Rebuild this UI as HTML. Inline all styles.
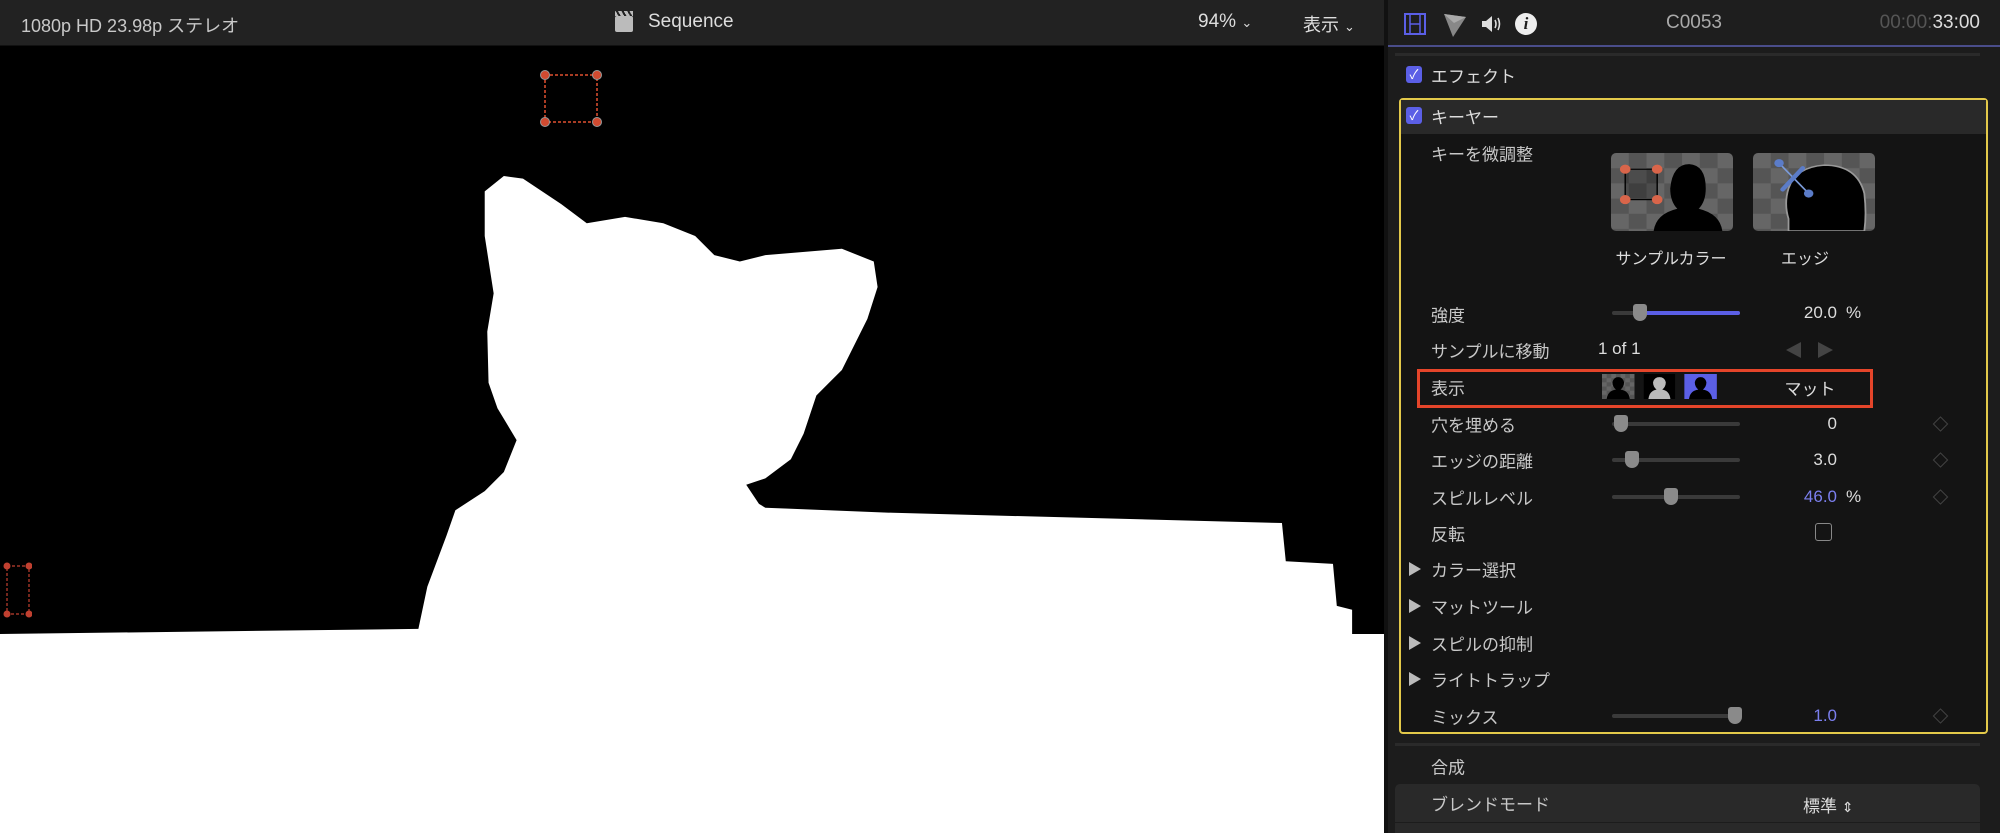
<!DOCTYPE html>
<html><head><meta charset="utf-8"><style>
*{margin:0;padding:0;box-sizing:border-box}
body{width:2000px;height:833px;background:#000;position:relative;overflow:hidden;font-family:"Liberation Sans","Noto Sans CJK JP",sans-serif;color:#cfcfcf}
.a{position:absolute;white-space:nowrap}
.lbl{position:absolute;left:1431px;font-size:17px;color:#c8c8c8;transform:translateY(-50%)}
.tri{position:absolute;left:1409px;width:0;height:0;border-left:12px solid #bbb;border-top:7px solid transparent;border-bottom:7px solid transparent;transform:translateY(-50%)}
.sl{position:absolute;left:1612px;width:128px;height:4px;background:#3a3a3a;border-radius:2px}
.kn{position:absolute;width:14px;height:17px;background:#8a8a8a;border-radius:3px 3px 7px 7px}
.val{position:absolute;right:163px;font-size:17px;color:#ddd;transform:translateY(-50%)}
.pct{position:absolute;left:1846px;font-size:17px;color:#ddd;transform:translateY(-50%)}
.dia{position:absolute;left:1935px;width:11px;height:11px;border:1px solid #444;transform:translateY(-50%) rotate(45deg)}
.cb{position:absolute;left:1406px;width:16px;height:17px;background:#5b5fe6;border-radius:3px;color:#fff;font-size:13px;text-align:center;line-height:17px}
</style></head><body>
<!-- viewer top bar -->
<div class="a" style="left:0;top:0;width:1386px;height:46px;background:#222;border-bottom:1px solid #111"></div>
<div class="a" style="left:21px;top:12px;font-size:18px;color:#c8c8c8">1080p HD 23.98p ステレオ</div>
<div class="a" style="left:615px;top:16px;width:18px;height:16px;background:#bbb;border-radius:2px"></div>
<div class="a" style="left:615px;top:11px;width:18px;height:5px;background:repeating-linear-gradient(60deg,#bbb 0 3px,#222 3px 5px)"></div>
<div class="a" style="left:648px;top:11px;font-size:19px;color:#ddd">Sequence</div>
<div class="a" style="left:1198px;top:11px;font-size:19px;color:#ddd">94% <span style="font-size:13px">&#8964;</span></div>
<div class="a" style="left:1303px;top:11px;font-size:18px;color:#ddd">表示 <span style="font-size:13px">&#8964;</span></div>
<!-- viewer -->
<svg class="a" style="left:0;top:0" width="1384" height="833" viewBox="0 0 1085 653" preserveAspectRatio="none">
<rect x="0" y="37" width="1085" height="616" fill="#000"/>
<path fill="#fff" d="M0,497 L328,493 L335,460 L350,420 L357,400 L380,385 L395,370 L405,345 L390,320 L383,300 L382,260 L387,230 L380,185 L380,150 L395,138 L410,140 L440,160 L460,175 L490,170 L520,175 L545,185 L560,200 L580,205 L600,200 L660,195 L685,205 L688,225 L680,250 L660,290 L640,310 L630,340 L620,360 L600,375 L585,380 L595,395 L600,398 L700,402 L1005,410 L1008,440 L1045,442 L1048,475 L1060,478 L1060,497 L1085,497 L1085,653 L0,653 Z"/>
</svg>
<svg class="a" style="left:540px;top:70px" width="62" height="58"><rect x="5" y="5" width="52" height="47" fill="none" stroke="#e05030" stroke-dasharray="3 2" stroke-width="1.5"/><g fill="#d04a30" stroke="#999"><circle cx="5" cy="5" r="4.5"/><circle cx="57" cy="5" r="4.5"/><circle cx="5" cy="52" r="4.5"/><circle cx="57" cy="52" r="4.5"/></g></svg>
<svg class="a" style="left:2px;top:562px" width="30" height="56"><rect x="5" y="4" width="22" height="48" fill="none" stroke="#c04030" stroke-dasharray="3 2" stroke-width="1.2"/><g fill="#c04030"><circle cx="5" cy="4" r="3.5"/><circle cx="27" cy="4" r="3.5"/><circle cx="5" cy="52" r="3.5"/><circle cx="27" cy="52" r="3.5"/></g></svg>
<div class="a" style="left:1384px;top:0;width:4px;height:833px;background:#111"></div>
<!-- inspector -->
<div class="a" style="left:1388px;top:0;width:612px;height:833px;background:#1c1c1c"></div>
<div class="a" style="left:1388px;top:0;width:612px;height:47px;background:#1e1e1e;border-bottom:2px solid #4a4d8a"></div>
<svg class="a" style="left:1404px;top:13px" width="22" height="22"><rect x="1" y="1" width="20" height="20" fill="none" stroke="#5b5fe6" stroke-width="2"/><line x1="6" y1="1" x2="6" y2="21" stroke="#5b5fe6" stroke-width="1.5"/><line x1="16" y1="1" x2="16" y2="21" stroke="#5b5fe6" stroke-width="1.5"/><line x1="6" y1="11" x2="16" y2="11" stroke="#5b5fe6" stroke-width="1.5"/></svg>
<svg class="a" style="left:1443px;top:13px" width="24" height="25"><path d="M1,1 L23,4 L10,24 Z" fill="#888"/><path d="M1,1 L23,4 L11,10 Z" fill="#aaa"/></svg>
<svg class="a" style="left:1480px;top:13px" width="24" height="22"><path d="M2,8 H6 L12,3 V19 L6,14 H2 Z" fill="#ddd"/><path d="M15,7 Q17,11 15,15 M18,5 Q21,11 18,17" stroke="#ddd" stroke-width="1.6" fill="none"/></svg>
<div class="a" style="left:1515px;top:13px;width:22px;height:22px;border-radius:50%;background:#eee;color:#1e1e1e;font:italic bold 17px 'Liberation Serif',serif;text-align:center;line-height:22px">i</div>
<div class="a" style="left:1694px;top:12px;font-size:19px;color:#aaa;transform:translateX(-50%)">C0053</div>
<div class="a" style="right:20px;top:12px;font-size:19px;color:#555">00:00:<span style="color:#ddd">33:00</span></div>
<div class="a" style="left:1395px;top:53px;width:585px;height:3px;background:#2a2a2a"></div>
<div class="cb" style="top:66px">✓</div>
<div class="lbl" style="top:75px;color:#ddd">エフェクト</div>
<!-- keyer box -->
<div class="a" style="left:1399px;top:98px;width:589px;height:636px;background:#141414;border:2px solid #e3c94a;border-radius:4px"></div>
<div class="a" style="left:1401px;top:100px;width:585px;height:34px;background:#292929"></div>
<div class="cb" style="top:107px">✓</div>
<div class="lbl" style="top:116px;color:#ddd">キーヤー</div>
<div class="lbl" style="top:153px">キーを微調整</div>
<svg class="a" style="left:1611px;top:153px;border-radius:5px" width="122" height="78" viewBox="0 0 103 77" preserveAspectRatio="none"><defs><pattern id="ck" width="30" height="30" patternUnits="userSpaceOnUse"><rect width="30" height="30" fill="#555"/><rect width="15" height="15" fill="#666"/><rect x="15" y="15" width="15" height="15" fill="#666"/></pattern></defs><rect width="103" height="77" fill="url(#ck)"/><path d="M36,77 Q38,60 56,55 Q50,48 50,35 Q52,11 66,11 Q80,12 80,35 Q80,48 74,55 Q92,60 94,77 Z" fill="#000"/><rect x="12" y="16" width="27" height="30" fill="rgba(0,0,0,.25)" stroke="#000" stroke-width="1.2"/><g fill="#d9654a"><circle cx="12" cy="16" r="4.5"/><circle cx="39" cy="16" r="4.5"/><circle cx="12" cy="46" r="4.5"/><circle cx="39" cy="46" r="4.5"/></g></svg>
<svg class="a" style="left:1753px;top:153px;border-radius:5px" width="122" height="78" viewBox="0 0 103 77" preserveAspectRatio="none"><rect width="103" height="77" fill="url(#ck)"/><path d="M30,77 L30,65 Q26,50 30,35 Q36,14 60,12 Q88,12 94,40 Q96,60 94,77 Z" fill="#000" stroke="#999" stroke-width="1.5"/><line x1="22" y1="10" x2="47" y2="40" stroke="#7a9ad8" stroke-width="1.5"/><line x1="25" y1="36" x2="42" y2="15" stroke="#5b7cc8" stroke-width="4" stroke-linecap="round"/><circle cx="22" cy="10" r="4" fill="#5b7cc8"/><circle cx="47" cy="40" r="4" fill="#5b7cc8"/></svg>
<div class="a" style="left:1671px;top:245px;font-size:16px;color:#ddd;transform:translateX(-50%)">サンプルカラー</div>
<div class="a" style="left:1805px;top:245px;font-size:16px;color:#ddd;transform:translateX(-50%)">エッジ</div>
<!-- rows -->
<div class="lbl" style="top:314px">強度</div>
<div class="sl" style="top:311px"></div><div class="sl" style="top:311px;left:1645px;width:95px;background:#5b5fe6"></div>
<div class="kn" style="left:1633px;top:304px"></div>
<div class="val" style="top:313px">20.0</div><div class="pct" style="top:313px">%</div>
<div class="lbl" style="top:350px">サンプルに移動</div>
<div class="a" style="left:1598px;top:339px;font-size:17px;color:#ddd">1 of 1</div>
<div class="a" style="left:1786px;top:342px;border-right:15px solid #444;border-top:8px solid transparent;border-bottom:8px solid transparent"></div>
<div class="a" style="left:1818px;top:342px;border-left:15px solid #444;border-top:8px solid transparent;border-bottom:8px solid transparent"></div>
<div class="lbl" style="top:387px">表示</div>
<svg class="a" style="left:1602px;top:374px" width="116" height="25" viewBox="0 0 100 24" preserveAspectRatio="none"><defs><pattern id="c2" width="8" height="8" patternUnits="userSpaceOnUse"><rect width="8" height="8" fill="#555"/><rect width="4" height="4" fill="#666"/><rect x="4" y="4" width="4" height="4" fill="#666"/></pattern></defs>
<rect width="28" height="24" fill="url(#c2)"/><path d="M4,24 Q5,16 12,15 Q9,12 9,8 Q10,3 14,3 Q18,3 19,8 Q19,12 16,15 Q23,16 24,24Z" fill="#000"/>
<rect x="36" width="27" height="24" fill="#000"/><path d="M40,24 Q41,16 47,15 Q44,12 44,8 Q45,3 49.5,3 Q54,3 55,8 Q55,12 52,15 Q58,16 59,24Z" fill="#bbb"/>
<rect x="71" width="28" height="24" fill="#5b5fe6"/><path d="M75,24 Q76,16 83,15 Q80,12 80,8 Q81,3 85,3 Q89,3 90,8 Q90,12 87,15 Q94,16 95,24Z" fill="#000"/></svg>
<div class="a" style="left:1810px;top:375px;font-size:17px;color:#ddd;transform:translateX(-50%)">マット</div>
<div class="a" style="left:1417px;top:369px;width:456px;height:39px;border:3px solid #e5452a"></div>
<div class="lbl" style="top:424px">穴を埋める</div>
<div class="sl" style="top:422px"></div><div class="kn" style="left:1614px;top:415px"></div>
<div class="val" style="top:424px">0</div><div class="dia" style="top:424px"></div>
<div class="lbl" style="top:460px">エッジの距離</div>
<div class="sl" style="top:458px"></div><div class="kn" style="left:1625px;top:451px"></div>
<div class="val" style="top:460px">3.0</div><div class="dia" style="top:460px"></div>
<div class="lbl" style="top:497px">スピルレベル</div>
<div class="sl" style="top:495px"></div><div class="kn" style="left:1664px;top:488px"></div>
<div class="val" style="top:497px;color:#7b7fee">46.0</div><div class="pct" style="top:497px">%</div><div class="dia" style="top:497px"></div>
<div class="lbl" style="top:533px">反転</div>
<div class="a" style="left:1815px;top:523px;width:17px;height:18px;border:1.5px solid #888;border-radius:3px"></div>
<div class="tri" style="top:569px"></div><div class="lbl" style="top:569px">カラー選択</div>
<div class="tri" style="top:606px"></div><div class="lbl" style="top:606px">マットツール</div>
<div class="tri" style="top:643px"></div><div class="lbl" style="top:643px">スピルの抑制</div>
<div class="tri" style="top:679px"></div><div class="lbl" style="top:679px">ライトトラップ</div>
<div class="lbl" style="top:716px">ミックス</div>
<div class="sl" style="top:714px"></div><div class="kn" style="left:1728px;top:707px"></div>
<div class="val" style="top:716px;color:#7b7fee">1.0</div><div class="dia" style="top:716px"></div>
<!-- below -->
<div class="a" style="left:1395px;top:743px;width:585px;height:3px;background:#2a2a2a"></div>
<div class="lbl" style="top:766px">合成</div>
<div class="a" style="left:1395px;top:784px;width:585px;height:38px;background:#292929;border-radius:5px 5px 0 0"></div>
<div class="lbl" style="top:803px">ブレンドモード</div>
<div class="a" style="left:1803px;top:792px;font-size:17px;color:#ddd">標準 <span style="font-size:14px">⇕</span></div>
<div class="a" style="left:1395px;top:823px;width:585px;height:10px;background:#292929"></div>
</body></html>
